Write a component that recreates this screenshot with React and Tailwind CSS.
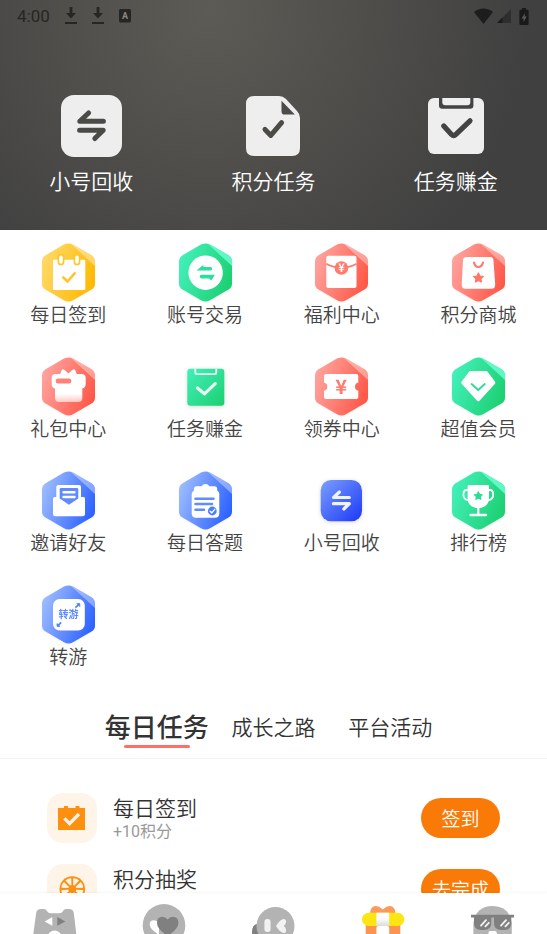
import { useState } from 'react';

const palettes = {
  yellow: ['#ffd966', '#ffb800'],
  red: ['#ffa39e', '#ff5645'],
  green: ['#42f0ba', '#1ccf70'],
  blue: ['#9dbcff', '#2a60ff'],
};

// 55x62 tile with the folded top right corner
function Hexagon({ color, id, children }) {
  const [from, to] = palettes[color];
  return (
    <svg width="55" height="62" viewBox="0 0 55 62" className="drop-shadow-xs" aria-hidden="true">
      <defs>
        <linearGradient id={id} x1="0" y1="0.3" x2="1" y2="0.7">
          <stop offset="0" stopColor={from} />
          <stop offset="1" stopColor={to} />
        </linearGradient>
      </defs>
      <path
        d="M23 2.6Q27.5 0.2 32 2.6L50.5 13.2Q54 15.5 54 19.5V41.5Q54 45.5 50.5 47.6L32 58.2Q27.5 60.8 23 58.2L4.5 47.6Q1 45.5 1 41.5V19.5Q1 15.5 4.5 13.2Z"
        fill={`url(#${id})`}
      />
      <path
        d="M29.5 1.6Q31 2 32 2.6L50.5 13.2Q54 15.5 54 19.5V24Z"
        fill={color === 'green' ? '#66ffcf' : '#fff'}
        opacity={color === 'green' ? 0.85 : 0.38}
      />
      {children}
    </svg>
  );
}

function Star({ x, y, size, fill }) {
  return (
    <path
      transform={`translate(${x} ${y}) scale(${size})`}
      d="M0-1L.29-.4L.95-.31L.48.15L.59.81L0 .5L-.59.81L-.48.15L-.95-.31L-.29-.4Z"
      fill={fill}
      stroke={fill}
      strokeWidth="0.25"
      strokeLinejoin="round"
    />
  );
}

function SignInIcon() {
  return (
    <Hexagon color="yellow" id="signin">
      <path d="M13 17.7H43.3Q44.3 17.7 44.3 18.7V47Q44.3 48 43.3 48H13Q12 48 12 47V18.7Q12 17.7 13 17.7Z" fill="#fff" />
      <g fill="#fff" stroke="#ffc62b" strokeWidth="1.6">
        <rect x="17.4" y="12.6" width="5.2" height="10" rx="2.6" />
        <rect x="33.4" y="12.6" width="5.2" height="10" rx="2.6" />
      </g>
      <path d="M22.3 35.5L26.5 39.5L33.7 31.3" fill="none" stroke="#ffc62b" strokeWidth="2.6" strokeLinecap="round" strokeLinejoin="round" />
    </Hexagon>
  );
}

function TradeIcon() {
  return (
    <Hexagon color="green" id="trade">
      <circle cx="27.6" cy="30.7" r="17.2" fill="#fff" />
      <g fill="#2bdf9c">
        <path d="M18.6 28.6L25.4 22.8V25H32.4A1.8 1.8 0 0 1 32.4 28.6Z" />
        <path d="M36.8 32.8H23.4A1.8 1.8 0 0 0 23.4 36.4H31L33.4 38.4Z" />
      </g>
    </Hexagon>
  );
}

function WelfareIcon() {
  return (
    <Hexagon color="red" id="welfare">
      <rect x="12.3" y="13.7" width="30.2" height="32.4" rx="2" fill="#fff" />
      <path d="M12.3 21.8Q19 25.6 27.4 26Q36 25.6 42.5 21.8" fill="none" stroke="#ff7a6f" strokeWidth="1.8" />
      <circle cx="27.4" cy="26" r="6.8" fill="#ff7a6f" />
      <text x="27.4" y="30" textAnchor="middle" fontSize="11" fontWeight="700" fontFamily="Noto Sans CJK SC, sans-serif" fill="#fff">¥</text>
    </Hexagon>
  );
}

function MallIcon() {
  return (
    <Hexagon color="red" id="mall">
      <path d="M15.5 15H39.5Q42 15 42.4 17.8L44.2 42.5Q44.3 46.7 40.5 46.7H14.3Q10.6 46.7 10.7 42.5L12 17.8Q12.4 15 15.5 15Z" fill="#fff" />
      <path d="M23 20.5Q24 25 27.4 25T32 20.5" fill="none" stroke="#ff7a6f" strokeWidth="2.2" strokeLinecap="round" />
      <Star x={27.4} y={36} size={5} fill="#ff7467" />
    </Hexagon>
  );
}

function GiftIcon() {
  return (
    <Hexagon color="red" id="giftbag">
      <linearGradient id="giftFade" x1="0" y1="0" x2="0" y2="1">
        <stop offset="0.75" stopColor="#fff" />
        <stop offset="1" stopColor="#fff" stopOpacity="0.6" />
      </linearGradient>
      <path
        d="M14.5 18H19.2L20.5 14.4Q21.5 12.6 23.2 13.8L27.4 17.4L31.6 13.8Q33.4 12.6 34.4 14.4L35.8 18H40.5Q44.7 18 44.7 22V27.5Q44.7 31.8 41.3 32.5V42Q41.3 46 37.3 46H18Q14 46 14 42V32.5Q10.7 31.8 10.7 27.5V22Q10.7 18 14.5 18Z"
        fill="url(#giftFade)"
      />
      <rect x="14.7" y="22.4" width="15.6" height="5" rx="2.5" fill="#ff8178" />
    </Hexagon>
  );
}

function TaskIcon() {
  return (
    <svg width="55" height="62" viewBox="0 0 55 62" className="drop-shadow-sm" aria-hidden="true">
      <linearGradient id="taskBg" x1="0" y1="0" x2="1" y2="1">
        <stop offset="0" stopColor="#42f0ba" />
        <stop offset="1" stopColor="#1ccf70" />
      </linearGradient>
      <rect x="9.3" y="12.7" width="37" height="37" rx="3.2" fill="url(#taskBg)" />
      <path d="M17.3 12.7V16.2Q17.3 18.2 19.3 18.2H36.3Q38.3 18.2 38.3 16.2V12.7" fill="none" stroke="#e3fff4" strokeWidth="1.8" />
      <path d="M19.4 32L26.4 37.8L37.2 27.6" fill="none" stroke="#eafff6" strokeWidth="3.2" strokeLinecap="round" strokeLinejoin="round" />
    </svg>
  );
}

function CouponIcon() {
  return (
    <Hexagon color="red" id="coupon">
      <path d="M12 18H42.3Q44.3 18 44.3 20V26.6A4.2 4.2 0 0 0 44.3 34.8V41Q44.3 43 42.3 43H12Q10 43 10 41V34.8A4.2 4.2 0 0 0 10 26.6V20Q10 18 12 18Z" fill="#fff" />
      <text x="27.2" y="38" textAnchor="middle" fontSize="20" fontWeight="700" fontFamily="Noto Sans CJK SC, sans-serif" fill="#ff7a6f">¥</text>
    </Hexagon>
  );
}

function VipIcon() {
  return (
    <Hexagon color="green" id="vip">
      <path d="M19.3 16.6H35.3L42.8 26.6L27.3 43.6L11.8 26.6Z" fill="#fff" stroke="#fff" strokeWidth="3.2" strokeLinejoin="round" />
      <path d="M20.6 28L27.2 34L33.8 28" fill="none" stroke="#2bdc96" strokeWidth="1.8" strokeLinecap="round" strokeLinejoin="round" />
    </Hexagon>
  );
}

function InviteIcon() {
  return (
    <Hexagon color="blue" id="invite">
      <path d="M17.3 15H38Q40 15 40 17V27H42.5Q44 27 44 28.5V44Q44 46.3 41.7 46.3H14.3Q12 46.3 12 44V28.5Q12 27 13.5 27H15.3V17Q15.3 15 17.3 15Z" fill="#fff" />
      <path d="M20 18H36Q37.3 18 37.3 19.3V28.5L28 34.8L18.7 28.5V19.3Q18.7 18 20 18Z" fill="#5f8bff" />
      <path d="M22.6 22.3H33.4M22.6 27H33.4" stroke="#fff" strokeWidth="2.6" strokeLinecap="round" />
    </Hexagon>
  );
}

function QuizIcon() {
  return (
    <Hexagon color="blue" id="quiz">
      <path
        d="M18.5 16.3H23.5Q25 14 27.5 14T31.5 16.3H36.5Q39 16.3 39.2 18.6V20.5Q41.3 21.5 41.3 24V43.5Q41.3 47.7 37 47.7H18Q13.7 47.7 13.7 43.5V24Q13.7 21.5 16 20.5V18.6Q16.2 16.3 18.5 16.3Z"
        fill="#fff"
      />
      <path d="M17.5 28.7H35.5M17.5 34H34M17.5 39.7H26" stroke="#608cff" strokeWidth="2.5" strokeLinecap="round" />
      <circle cx="34.3" cy="41" r="4.4" fill="#4d7eff" />
      <path d="M32 41.2L33.8 42.8L36.8 39.4" fill="none" stroke="#fff" strokeWidth="1.3" strokeLinecap="round" />
    </Hexagon>
  );
}

function RecycleIcon() {
  return (
    <svg width="55" height="62" viewBox="0 0 55 62" className="drop-shadow-sm" aria-hidden="true">
      <linearGradient id="recycleBg" x1="0" y1="0" x2="1" y2="1">
        <stop offset="0" stopColor="#7a9fff" />
        <stop offset="1" stopColor="#1c38f5" />
      </linearGradient>
      <rect x="6.7" y="10" width="41.3" height="41.3" rx="10.5" fill="url(#recycleBg)" />
      <path d="M35.3 27.5H19.6L25.4 22M19.4 33.7H35.4L29.8 39" fill="none" stroke="#eef2ff" strokeWidth="3.2" strokeLinecap="round" strokeLinejoin="round" />
    </svg>
  );
}

function RankIcon() {
  return (
    <Hexagon color="green" id="rank">
      <g fill="none" stroke="#fff" strokeWidth="1.8">
        <path d="M18 20H15.5Q12.4 20 12.4 24.8T18 30.6" />
        <path d="M36.6 20H39.1Q42.2 20 42.2 24.8T36.6 30.6" />
      </g>
      <path d="M17.6 15H37Q38 15 38 16V27.5Q38 34 33.5 36.6Q30.6 38.3 27.3 38.3T21.1 36.6Q16.6 34 16.6 27.5V16Q16.6 15 17.6 15Z" fill="#fff" />
      <path d="M27.3 37V45" stroke="#fff" strokeWidth="2.2" />
      <path d="M19.6 45H35" stroke="#fff" strokeWidth="2.4" strokeLinecap="round" />
      <Star x={27.3} y={26} size={4.2} fill="#2bdc96" />
    </Hexagon>
  );
}

function TransferIcon() {
  return (
    <Hexagon color="blue" id="transfer">
      <rect x="12" y="15" width="31.8" height="31.4" rx="6.5" fill="#fff" />
      <text x="27.4" y="34" textAnchor="middle" fontSize="10" fontWeight="700" fontFamily="Noto Sans CJK SC, sans-serif" fill="#5e8bff">转游</text>
      <g fill="#4f80ff" stroke="#4f80ff" strokeWidth="1.6">
        <path d="M34.4 23.6L37.4 20.8" />
        <path d="M35.8 19.6H38.8V22.6Z" strokeWidth="0.8" />
        <path d="M20.2 38.4L17.4 41.2" />
        <path d="M16 39.6V42.4H19Z" strokeWidth="0.8" />
      </g>
    </Hexagon>
  );
}

const shortcuts = [
  {
    label: '小号回收',
    icon: (
      <svg width="61" height="62" viewBox="0 0 61 62" aria-hidden="true">
        <rect width="61" height="62" rx="13" fill="#eee" />
        <path d="M42.4 26.3H18.8L27.6 18M18.6 35.2H42.2L33.8 43.6" fill="none" stroke="#4a4a47" strokeWidth="5" strokeLinecap="round" strokeLinejoin="round" />
      </svg>
    ),
  },
  {
    label: '积分任务',
    icon: (
      <svg width="54" height="60" viewBox="0 0 54 60" aria-hidden="true">
        <path d="M8 0H33Q37 0 40 3L51 15Q54 18 54 22V52Q54 60 46 60H8Q0 60 0 52V8Q0 0 8 0Z" fill="#eee" />
        <path d="M35.5 4.8V15.5Q35.5 18.6 38.6 18.6H48.8Z" fill="#4c4b48" />
        <path d="M19 33.4L24.8 39.4L35.6 26.6" fill="none" stroke="#4c4b48" strokeWidth="5" strokeLinecap="round" strokeLinejoin="round" />
      </svg>
    ),
  },
  {
    label: '任务赚金',
    icon: (
      <svg width="56" height="56" viewBox="0 0 56 56" aria-hidden="true">
        <rect width="56" height="56" rx="6" fill="#eee" />
        <path d="M11 0H45.4V7.5Q45.4 10.8 42 10.8H14.4Q11 10.8 11 7.5Z" fill="#434343" />
        <path d="M14.3 0H42.3V4.3Q42.3 7.3 39.3 7.3H17.3Q14.3 7.3 14.3 4.3Z" fill="#eee" />
        <path d="M15.8 28L23.5 36.4Q25.7 38.6 27.9 36.4L42 22.8" fill="none" stroke="#434343" strokeWidth="5.2" strokeLinecap="round" />
      </svg>
    ),
  },
];

const services = [
  { label: '每日签到', Icon: SignInIcon },
  { label: '账号交易', Icon: TradeIcon },
  { label: '福利中心', Icon: WelfareIcon },
  { label: '积分商城', Icon: MallIcon },
  { label: '礼包中心', Icon: GiftIcon },
  { label: '任务赚金', Icon: TaskIcon },
  { label: '领券中心', Icon: CouponIcon },
  { label: '超值会员', Icon: VipIcon },
  { label: '邀请好友', Icon: InviteIcon },
  { label: '每日答题', Icon: QuizIcon },
  { label: '小号回收', Icon: RecycleIcon },
  { label: '排行榜', Icon: RankIcon },
  { label: '转游', Icon: TransferIcon },
];

const tabs = ['每日任务', '成长之路', '平台活动'];

const tasks = [
  {
    title: '每日签到',
    reward: '+10积分',
    action: '签到',
    icon: (
      <svg width="50" height="50" viewBox="0 0 50 50" aria-hidden="true">
        <path d="M11 15H17V13H21V15H28.5V13H32.5V15H38V37H11Z" fill="#ff8f0f" />
        <path d="M17.4 25.4L22.6 30.6L32 21" fill="none" stroke="#fff4e8" strokeWidth="3.4" />
      </svg>
    ),
  },
  {
    title: '积分抽奖',
    action: '去完成',
    icon: (
      <svg width="50" height="50" viewBox="0 0 50 50" aria-hidden="true">
        <circle cx="25.3" cy="25" r="12.8" fill="#ff8f0f" />
        {[22, 67, 112, 157, 203, 248, 293, 338].map((deg) => (
          <path key={deg} transform={`rotate(${deg} 25.3 25)`} d="M24.6 21L22.2 14.6Q25.3 13.2 28.4 14.6L26 21Z" fill="#fff4e8" />
        ))}
      </svg>
    ),
  },
];

const navItems = [
  {
    label: '游戏',
    icon: (
      <>
        <path d="M0.3 30L3.2 9Q3.8 5 8 5H10.5Q13.2 5 14.3 7.4Q15.2 9.2 17.4 9.2H26.6Q28.8 9.2 29.7 7.4Q30.8 5 33.5 5H36Q40.2 5 40.8 9L43.3 30Z" fill="#b3b3b3" />
        <path d="M11.7 17.4L19.3 13V21.8Z" fill="#fff" />
        <path d="M24.3 13V21.8L32.3 17.4Z" fill="#808080" />
        <circle cx="21.6" cy="33" r="6.6" fill="#fff" />
      </>
    ),
  },
  {
    label: '喜欢',
    icon: (
      <>
        <circle cx="22" cy="21.4" r="21.3" fill="#b3b3b3" />
        <path d="M17 31Q7.7 25 7.7 20.5Q7.7 16.3 12 16.3Q15 16.3 17 19Z" fill="#fff" />
        <path d="M25.6 32Q15 25 15 19Q15 12.8 20.5 12.8Q23.5 12.8 25.6 15.4Q27.8 12.8 30.8 12.8Q36.4 12.8 36.4 19Q36.4 25 25.6 32Z" fill="#808080" />
      </>
    ),
  },
  {
    label: '消息',
    icon: (
      <>
        <ellipse cx="6" cy="28" rx="5" ry="8" fill="#808080" />
        <circle cx="24.5" cy="22" r="19" fill="#b3b3b3" />
        <rect x="13.4" y="15" width="6.2" height="13" rx="3" fill="#f2f2f2" />
        <path d="M25 22Q29.5 14.8 33 15Q35.6 15.6 35 18.6Q34.6 20.6 32.8 22Q34.6 23.4 35 25.4Q35.6 28.6 33 29Q29.5 29.2 25 22Z" fill="#f2f2f2" />
      </>
    ),
  },
  {
    label: '福利',
    icon: (
      <>
        <linearGradient id="ribbon" x1="0" y1="0" x2="0" y2="1">
          <stop offset="0.4" stopColor="#fff" />
          <stop offset="1" stopColor="#dcdcdc" />
        </linearGradient>
        <path d="M9 9.5Q9.5 2 14.8 2Q18 2 21.8 5.4Q25.5 2 28.8 2Q34 2 34.6 9.5Z" fill="#fb9a5b" />
        <path d="M4.7 21H39.3V30H4.7Z" fill="#fb9452" />
        <rect x="1" y="8.7" width="42.3" height="13.3" rx="6.6" fill="#fce512" />
        <path d="M15.4 8.7H28.2V22H15.4Z" fill="url(#ribbon)" />
        <path d="M15.4 30V24Q15.4 22 17.4 22H26.2Q28.2 22 28.2 24V30Z" fill="#fff" />
      </>
    ),
    active: true,
  },
  {
    label: '我的',
    icon: (
      <>
        <path d="M3.4 30V19Q6 2 22.6 2T41.8 19V30Z" fill="#b3b3b3" />
        <path d="M1 10.8H44V13.6H1Z" fill="#808080" />
        <path d="M4 13H21.3V19Q21.3 26 14 26H11Q4 26 4 19ZM24 13H41.3V19Q41.3 26 34 26H31Q24 26 24 19Z" fill="#808080" />
        <path d="M11 21.6L16 16.2M15.4 22.4L18.8 18.8M31 21.6L36 16.2M35.4 22.4L38.8 18.8" stroke="#f2f2f2" strokeWidth="1.8" strokeLinecap="round" />
        <rect x="18.4" y="27" width="8.4" height="6" rx="2" fill="#fff" />
      </>
    ),
  },
];

function StatusBar() {
  return (
    <div className="flex h-8 items-center justify-between pr-[18px] pl-[17px] font-['Roboto',sans-serif] text-[#262624]">
      <div className="flex items-center gap-[15px]">
        <span className="text-[17px] leading-6 font-normal">4:00</span>
        <svg width="12" height="18" viewBox="0 0 12 18" fill="currentColor" aria-hidden="true">
          <path d="M4.6 0H7.4V6H11L6 11.6L1 6H4.6ZM0 15H12V17H0Z" />
        </svg>
        <svg width="12" height="18" viewBox="0 0 12 18" fill="currentColor" aria-hidden="true">
          <path d="M4.6 0H7.4V6H11L6 11.6L1 6H4.6ZM0 15H12V17H0Z" />
        </svg>
        <svg width="12" height="14" viewBox="0 0 12 14" aria-hidden="true">
          <rect width="12" height="13.4" rx="1.4" fill="currentColor" />
          <text x="6" y="10" textAnchor="middle" fontSize="9" fontWeight="700" fill="#8a8984">A</text>
        </svg>
      </div>
      <div className="flex items-center gap-1">
        <svg width="19" height="16" viewBox="0 0 19 16" aria-hidden="true">
          <path d="M9.5 16L0 4Q4.2 0.4 9.5 0.4T19 4Z" fill="#1d1d1d" />
        </svg>
        <svg width="14" height="14" viewBox="0 0 14 14" aria-hidden="true">
          <path d="M14 0V14H0Z" fill="#2e2e2e" />
          <path d="M5.5 8.5V14H0Z" fill="#1a1a1a" />
        </svg>
        <svg width="14" height="17" viewBox="5 0 10 17" aria-hidden="true" preserveAspectRatio="xMaxYMid">
          <path d="M8 1.8V0H12V1.8H13.4Q14.6 1.8 14.6 3V15.8Q14.6 17 13.4 17H6.6Q5.4 17 5.4 15.8V3Q5.4 1.8 6.6 1.8Z" fill="#1a1a1a" />
          <path d="M11 5L7.6 10.4H9.6V14L12.6 8.6H10.6Z" fill="#5a5a5a" />
        </svg>
      </div>
    </div>
  );
}

export default function App() {
  const [activeTab, setActiveTab] = useState('每日任务');

  return (
    <div className="flex h-dvh flex-col overflow-hidden bg-white font-['Noto_Sans_CJK_SC',sans-serif] font-[350] text-[#333]">
      <main className="min-h-0 flex-1 overflow-y-auto [scrollbar-width:none]">
        <header className="bg-[radial-gradient(circle_at_38%_5%,#5d5b55_0,#404040_320px)] pb-9">
          <StatusBar />
          <div className="mt-[62px] grid grid-cols-3">
            {shortcuts.map((item) => (
              <button key={item.label} type="button" className="flex flex-col items-center">
                <span className="flex h-16 items-center">{item.icon}</span>
                <span className="mt-2 text-[21px] leading-7 text-white">{item.label}</span>
              </button>
            ))}
          </div>
        </header>

        <section className="grid grid-cols-4 gap-y-8 pt-3">
          {services.map(({ label, Icon }) => (
            <button key={label} type="button" className="flex flex-col items-center">
              <Icon />
              <span className="text-[19px] leading-5 text-[#444]">{label}</span>
            </button>
          ))}
        </section>

        <div className="mt-11 border-b border-[#f2f2f2] pb-4">
          <div className="mx-auto grid w-[350px] grid-cols-3 items-center" role="tablist">
            {tabs.map((tab) => (
              <button
                key={tab}
                type="button"
                role="tab"
                aria-selected={tab === activeTab}
                onClick={() => setActiveTab(tab)}
                className={
                  tab === activeTab
                    ? 'relative text-center text-[26px] leading-8 font-medium whitespace-nowrap'
                    : 'text-center text-[21px] leading-8 whitespace-nowrap'
                }
              >
                {tab}
                {tab === activeTab && (
                  <span className="absolute -bottom-1.5 left-1/2 h-[3px] w-[66px] -translate-x-1/2 rounded-full bg-[#ff6f68]" />
                )}
              </button>
            ))}
          </div>
        </div>

        <ul className="flex flex-col gap-[21px] px-[47px] pt-[34px]">
          {tasks.map((task) => (
            <li key={task.title} className="flex items-center gap-4">
              <span className="size-[50px] shrink-0 rounded-2xl bg-[#fff4e8]">{task.icon}</span>
              <div className="flex-1 self-start">
                <p className="text-[21px] leading-7">{task.title}</p>
                {task.reward && (
                  <p className="font-['Roboto','Noto_Sans_CJK_SC',sans-serif] text-base leading-[22px] font-normal text-[#999]">{task.reward}</p>
                )}
              </div>
              <button type="button" className="h-10 w-[79px] rounded-full bg-[#fa7a07] text-[19px] leading-5 text-white">
                {task.action}
              </button>
            </li>
          ))}
        </ul>
      </main>

      <nav className="relative grid grid-cols-5 bg-white pt-[11px] shadow-[0_-1px_2px_rgba(0,0,0,0.04)]">
        {navItems.map((item) => (
          <a key={item.label} href="#" aria-label={item.label} aria-current={item.active ? 'page' : undefined} className="flex justify-center">
            <svg width="44" height="30" viewBox="0 0 44 30" aria-hidden="true">
              {item.icon}
            </svg>
          </a>
        ))}
      </nav>
    </div>
  );
}
